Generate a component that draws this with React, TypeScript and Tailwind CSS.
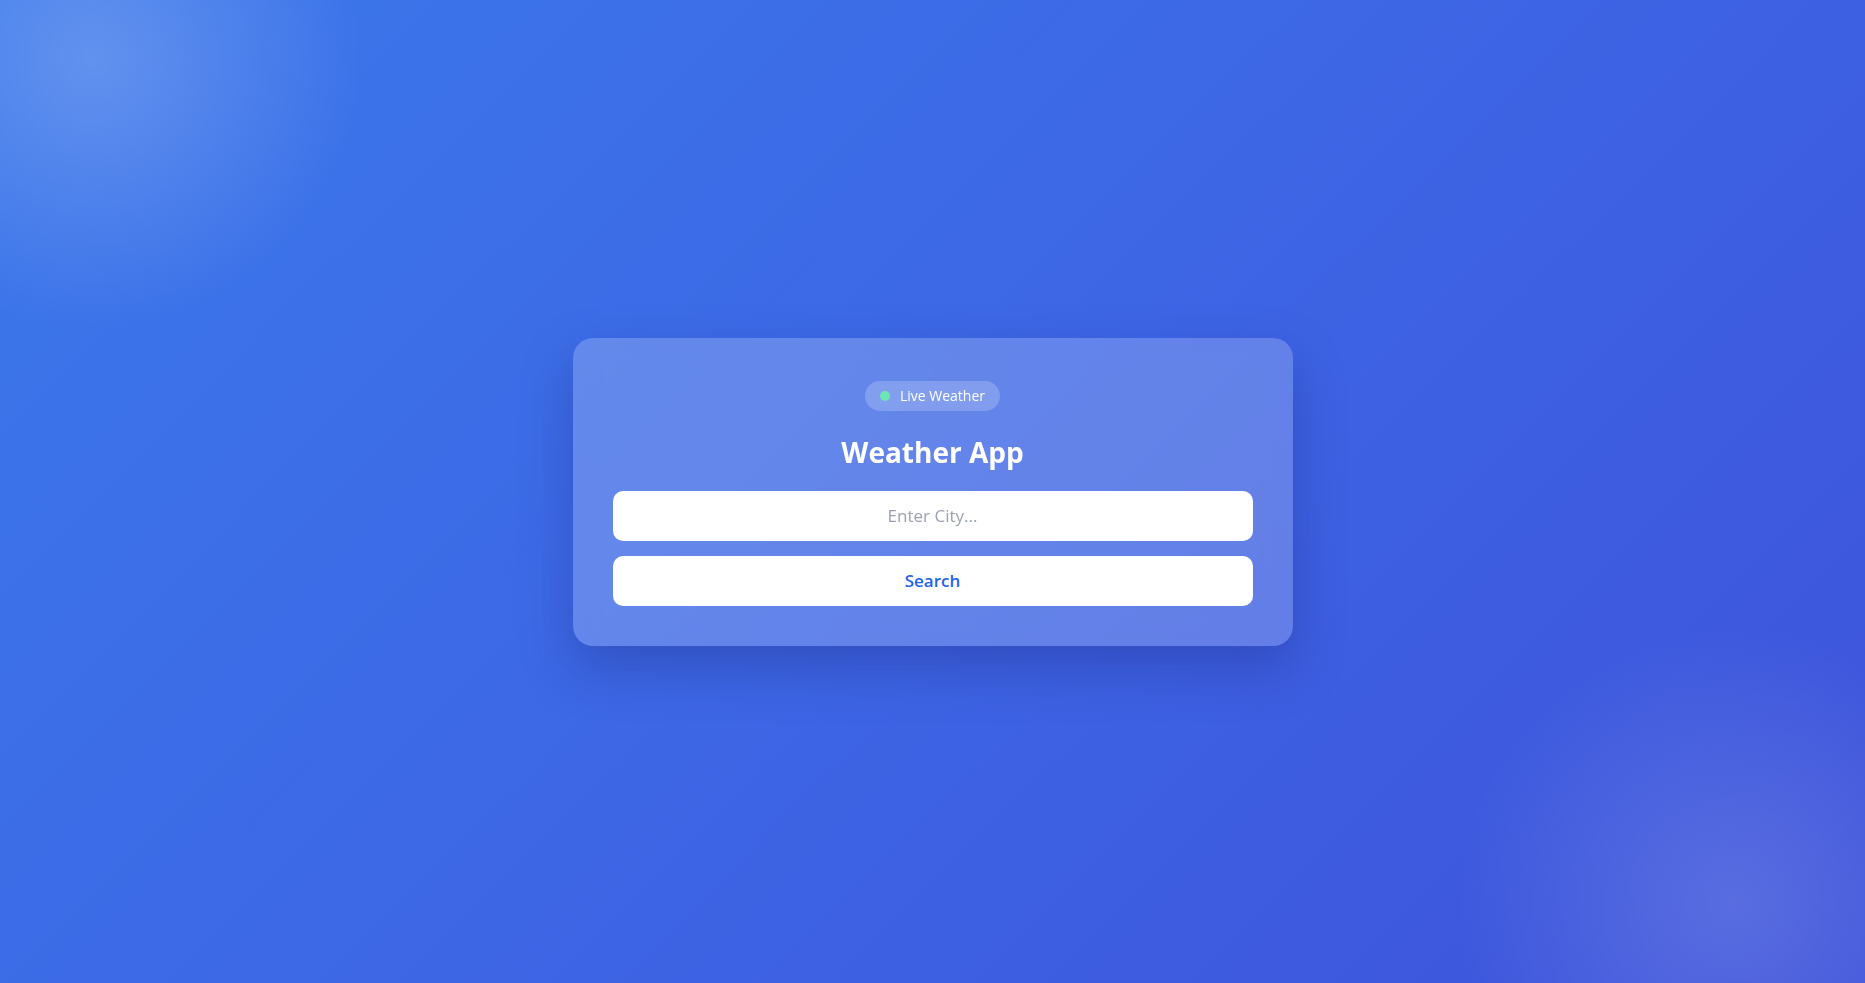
import React from "react";

export default function App() {
  return (
    <div
      className="min-h-screen w-full flex items-center justify-center bg-[radial-gradient(circle_at_5%_6%,rgba(255,255,255,0.2),rgba(255,255,255,0)_270px),radial-gradient(circle_at_93%_92%,rgba(255,255,255,0.14),rgba(255,255,255,0)_280px),linear-gradient(135deg,#3b78eb_0%,#3d66e5_50%,#3e52da_100%)]"
      style={{ fontFamily: '"Open Sans", "Noto Sans", sans-serif' }}
    >
      <div className="w-[720px] rounded-[20px] bg-white/20 backdrop-blur-md shadow-[0_22px_50px_rgba(30,40,130,0.35)] px-10 pt-[43px] pb-10 flex flex-col items-center">
        <div className="h-[30px] rounded-full bg-white/20 px-[15px] flex items-center gap-[10px]">
          <span className="w-[10px] h-[10px] rounded-full bg-[#6ee7b7]" />
          <span className="text-[14px] text-white leading-none">Live Weather</span>
        </div>
        <h1 className="mt-[23px] text-[28px] leading-[36px] font-bold text-white">Weather App</h1>
        <input
          type="text"
          placeholder="Enter City..."
          className="mt-[21px] w-full h-[50px] rounded-[10px] bg-white text-center text-[17px] text-gray-700 placeholder:text-[#9ca3af] outline-none"
          style={{ fontFamily: '"Open Sans", "Noto Sans", sans-serif' }}
        />
        <button
          className="mt-[15px] w-full h-[50px] rounded-[10px] bg-white text-[17px] font-semibold text-[#2563eb]"
          style={{ fontFamily: '"Open Sans", "Noto Sans", sans-serif' }}
        >
          Search
        </button>
      </div>
    </div>
  );
}
